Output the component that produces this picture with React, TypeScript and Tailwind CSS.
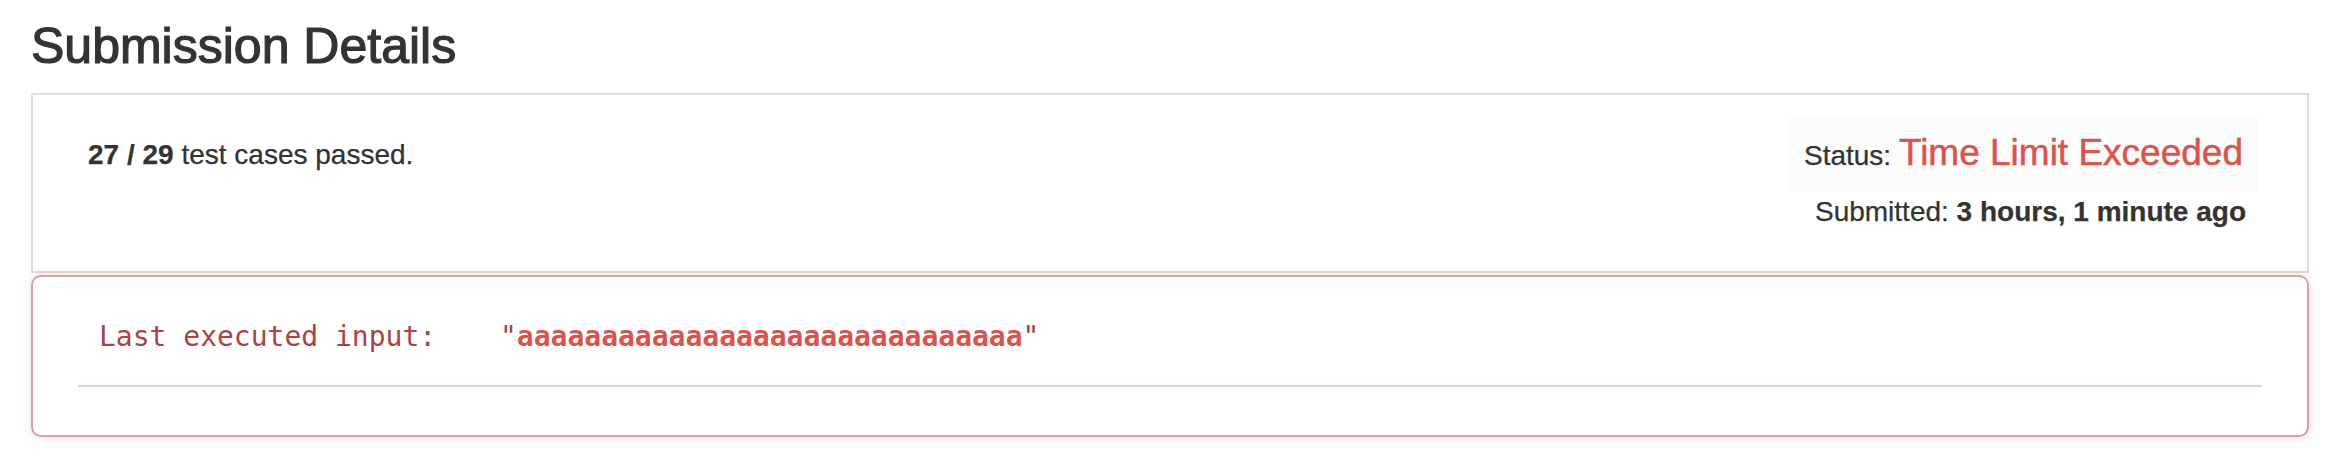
import React from "react";

const sans = "font-['Liberation_Sans',Arial,sans-serif]";
const mono = "font-['DejaVu_Sans_Mono',Menlo,monospace]";

const SubmissionSummary = () => {
  return (
    <div className="h-[180px] border-2 border-[#dddddd] flex justify-between">
      <div className="pl-[55px] pt-[46px] text-[28px] leading-none text-[#333333] [-webkit-text-stroke:0.25px_#333333]">
        <b>27 / 29</b> test cases passed.
      </div>
      <div className="pt-[23px] flex flex-col items-end">
        <div className="mr-[49px] h-[73px] pt-[16px] px-[15px] bg-[#fbfbfb] flex items-baseline">
          <span className="text-[28px] leading-none text-[#333333] [-webkit-text-stroke:0.25px_#333333]">
            Status:&nbsp;
          </span>
          <span className="text-[37px] leading-none text-[#d9534f] [-webkit-text-stroke:0.5px_#d9534f]">
            Time Limit Exceeded
          </span>
        </div>
        <div className="mr-[61px] mt-[7px] text-[28px] leading-none text-[#333333] [-webkit-text-stroke:0.25px_#333333]">
          Submitted: <b>3 hours, 1 minute ago</b>
        </div>
      </div>
    </div>
  );
};

const LastInput = () => {
  return (
    <div className="mt-[2px] h-[162px] rounded-[10px] border-2 border-[#d6a3a3] shadow-[0_0_8px_rgba(200,140,140,0.35)] px-[45px] pt-[46px]">
      <div className={`${mono} pl-[21px] flex text-[28px] leading-none`}>
        <span className="text-[#a94442] w-[401px]">Last executed input:</span>
        <span className="text-[#a94442]">
          "<b className="text-[#d9534f]">aaaaaaaaaaaaaaaaaaaaaaaaaaaaaa</b>"
        </span>
      </div>
      <div className="mt-[34px] h-[2px] bg-[#f0caca]" />
    </div>
  );
};

export default function App() {
  return (
    <div className={`${sans} w-full h-[474px] bg-white pl-[31px] pr-[23px]`}>
      <h3 className="h-[93px] pt-[21px] text-[50px] leading-none text-[#333333] [-webkit-text-stroke:1.2px_#333333]">
        Submission Details
      </h3>
      <SubmissionSummary />
      <LastInput />
    </div>
  );
}
